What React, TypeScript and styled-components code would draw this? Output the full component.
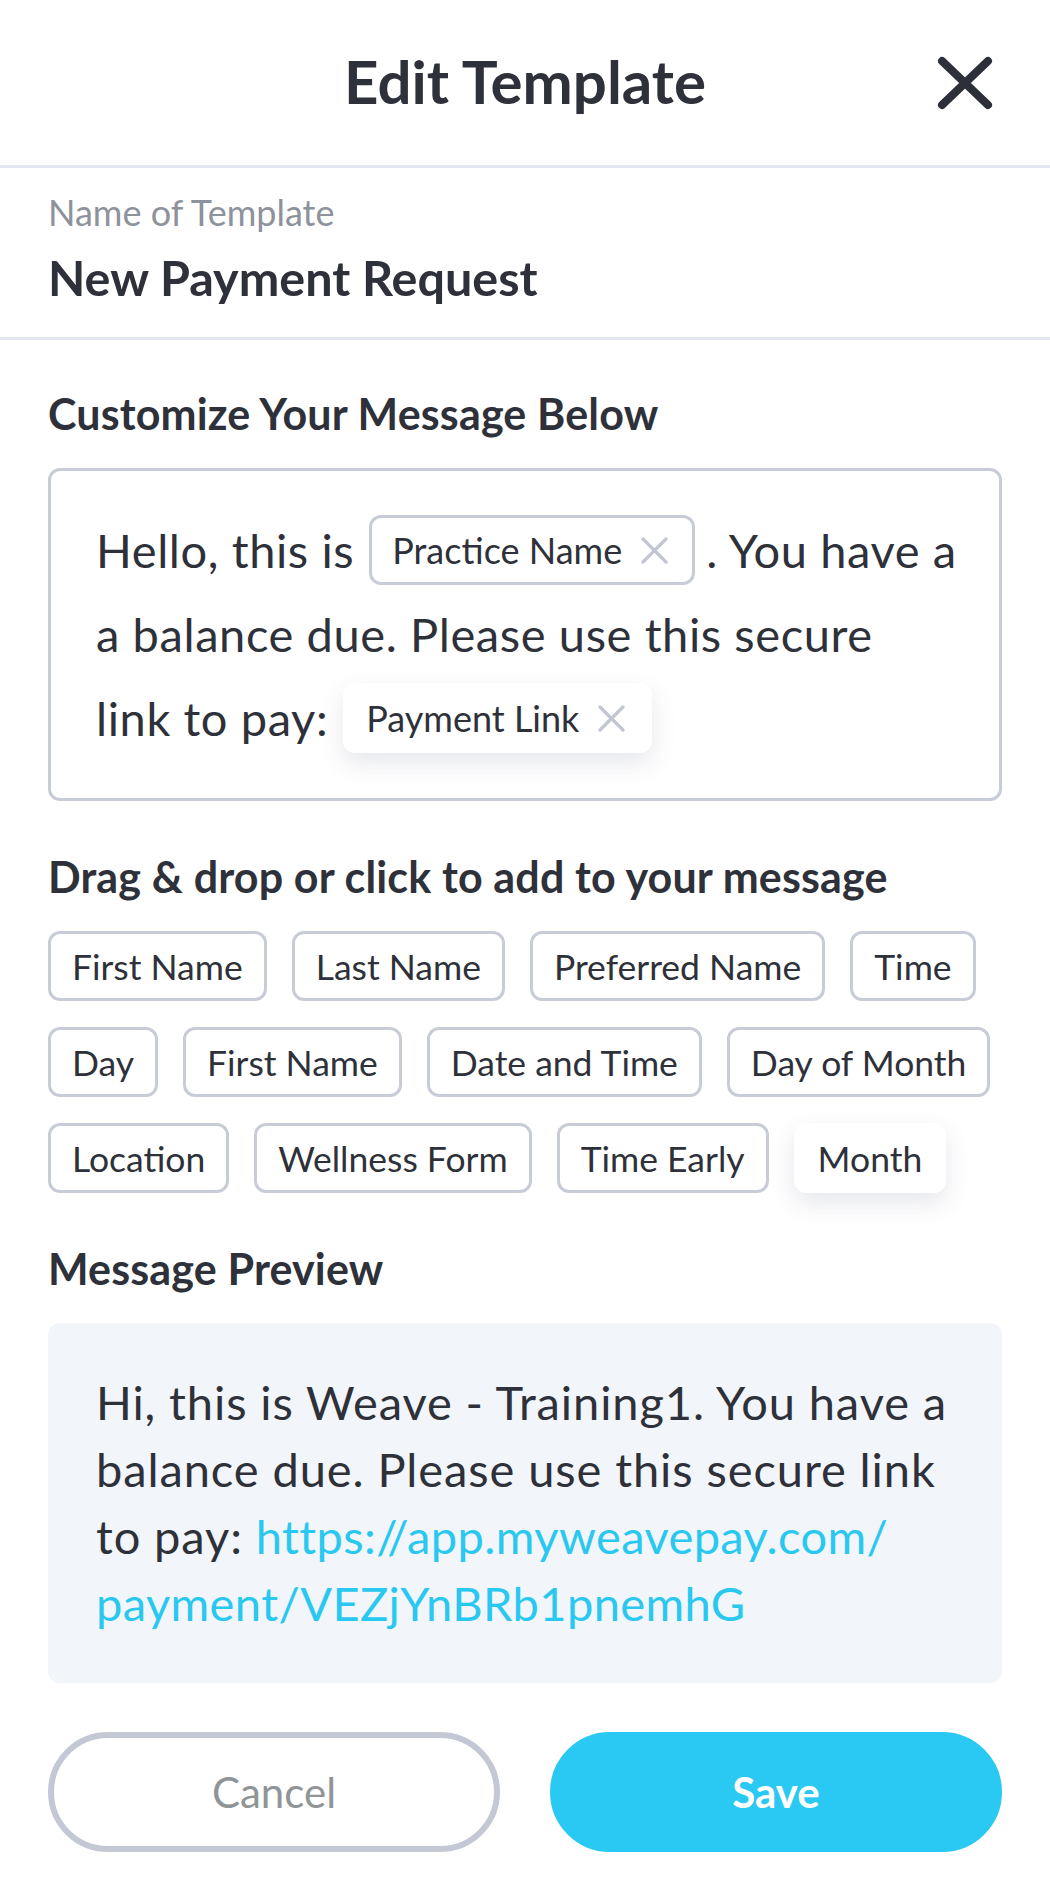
import styled, { createGlobalStyle } from "styled-components";

const GlobalStyle = createGlobalStyle`
	body {
		margin: 0;
		background: #fff;
		font-family: Lato, "Open Sans", sans-serif;
		color: #2e3139;
	}
`;

const Page = styled.div`
	width: 1050px;
	min-height: 1884px;
	background: #fff;
`;

const Header = styled.header`
	display: grid;
	grid-template-columns: 1fr auto 1fr;
	align-items: center;
	height: 165px;
	border-bottom: 3px solid #e4e7f0;
`;

const Title = styled.h1`
	grid-column: 2;
	margin: 0 0 4px;
	font-size: 60px;
	font-weight: 700;
	line-height: 1;
`;

const CloseButton = styled.button`
	justify-self: end;
	display: flex;
	margin-right: 57px;
	padding: 0;
	border: none;
	background: none;
	cursor: pointer;
`;

const NameSection = styled.section`
	padding: 22px 48px 31px;
	border-bottom: 3px solid #e4e7f0;
`;

const FieldLabel = styled.div`
	font-size: 36px;
	line-height: 44px;
	color: #8d929b;
`;

const FieldValue = styled.div`
	margin-top: 14px;
	font-size: 48.5px;
	font-weight: 700;
	line-height: 58px;
`;

const Body = styled.div`
	padding: 0 48px 33px;
`;

const SectionTitle = styled.h2`
	margin: 50px 0 28px;
	font-size: 43px;
	font-weight: 700;
	line-height: 52px;
	letter-spacing: 0.15px;

	&:first-child {
		margin-top: 48px;
	}
`;

const Editor = styled.div`
	border: 3px solid #c8ccd6;
	border-radius: 12px;
	padding: 37px 30px 38px 45px;
	font-size: 47px;
	letter-spacing: 0.6px;
`;

const EditorLine = styled.div`
	display: flex;
	align-items: center;
	height: 84px;
	white-space: pre;
`;

const Token = styled.span<{ $dragging?: boolean }>`
	display: inline-flex;
	align-items: center;
	gap: 19px;
	height: 70px;
	box-sizing: border-box;
	margin: 0 11px 0 15px;
	padding: 0 24px 0 20px;
	border: 3px solid ${(p) => (p.$dragging ? "transparent" : "#c8ccd6")};
	border-radius: 12px;
	background: #fff;
	font-size: 36px;
	letter-spacing: normal;
	box-shadow: ${(p) => (p.$dragging ? "0 10px 24px rgba(60, 70, 110, 0.13)" : "none")};
`;

const TagList = styled.div`
	display: flex;
	flex-direction: column;
	gap: 26px;
`;

const TagRow = styled.div`
	display: flex;
	gap: 25px;
`;

const Tag = styled.button<{ $dragging?: boolean }>`
	height: 70px;
	padding: 0 21px;
	border: 3px solid ${(p) => (p.$dragging ? "transparent" : "#c8ccd6")};
	border-radius: 12px;
	background: #fff;
	font-family: inherit;
	font-size: 35.5px;
	color: #2e3139;
	white-space: nowrap;
	box-shadow: ${(p) => (p.$dragging ? "0 10px 24px rgba(60, 70, 110, 0.13)" : "none")};
`;

const Preview = styled.div`
	padding: 46px 48px;
	border-radius: 12px;
	background: #f2f5fa;
	font-size: 47px;
	line-height: 67px;
	letter-spacing: 0.9px;
`;

const PreviewLink = styled.a`
	color: #29c8f1;
	text-decoration: none;
	letter-spacing: 0.4px;
`;

const Actions = styled.div`
	display: grid;
	grid-template-columns: 1fr 1fr;
	gap: 50px;
	margin-top: 49px;
`;

const ActionButton = styled.button<{ $primary?: boolean }>`
	height: 120px;
	border-radius: 60px;
	border: 6px solid ${(p) => (p.$primary ? "#29c9f3" : "#c4c8d4")};
	background: ${(p) => (p.$primary ? "#29c9f3" : "#fff")};
	color: ${(p) => (p.$primary ? "#fff" : "#8f9597")};
	font-family: inherit;
	font-size: 42px;
	font-weight: ${(p) => (p.$primary ? 700 : 400)};
	cursor: pointer;
`;

const CloseIcon = () => (
	<svg width="56" height="54" viewBox="0 0 56 54">
		<path d="M5 5 L51 49 M51 5 L5 49" stroke="#2d3039" strokeWidth="8" strokeLinecap="round" />
	</svg>
);

const RemoveIcon = () => (
	<svg width="27" height="27" viewBox="0 0 27 27">
		<path d="M2 2 L25 25 M25 2 L2 25" stroke="#c2c6d0" strokeWidth="3.2" strokeLinecap="round" />
	</svg>
);

const tagRows = [
	["First Name", "Last Name", "Preferred Name", "Time"],
	["Day", "First Name", "Date and Time", "Day of Month"],
	["Location", "Wellness Form", "Time Early", "Month"],
];

export default function App() {
	return (
		<Page>
			<GlobalStyle />
			<Header>
				<Title>Edit Template</Title>
				<CloseButton aria-label="Close">
					<CloseIcon />
				</CloseButton>
			</Header>

			<NameSection>
				<FieldLabel>Name of Template</FieldLabel>
				<FieldValue>New Payment Request</FieldValue>
			</NameSection>

			<Body>
				<SectionTitle>Customize Your Message Below</SectionTitle>
				<Editor>
					<EditorLine>
						Hello, this is
						<Token>
							Practice Name
							<RemoveIcon />
						</Token>
						. You have a
					</EditorLine>
					<EditorLine>a balance due. Please use this secure</EditorLine>
					<EditorLine>
						link to pay:
						<Token $dragging>
							Payment Link
							<RemoveIcon />
						</Token>
					</EditorLine>
				</Editor>

				<SectionTitle>Drag &amp; drop or click to add to your message</SectionTitle>
				<TagList>
					{tagRows.map((row, i) => (
						<TagRow key={i}>
							{row.map((tag) => (
								<Tag key={tag} $dragging={tag === "Month"}>
									{tag}
								</Tag>
							))}
						</TagRow>
					))}
				</TagList>

				<SectionTitle>Message Preview</SectionTitle>
				<Preview>
					Hi, this is Weave - Training1. You have a
					<br />
					balance due. Please use this secure link
					<br />
					to pay: <PreviewLink href="#">https://app.myweavepay.com/</PreviewLink>
					<br />
					<PreviewLink href="#">payment/VEZjYnBRb1pnemhG</PreviewLink>
				</Preview>

				<Actions>
					<ActionButton>Cancel</ActionButton>
					<ActionButton $primary>Save</ActionButton>
				</Actions>
			</Body>
		</Page>
	);
}
